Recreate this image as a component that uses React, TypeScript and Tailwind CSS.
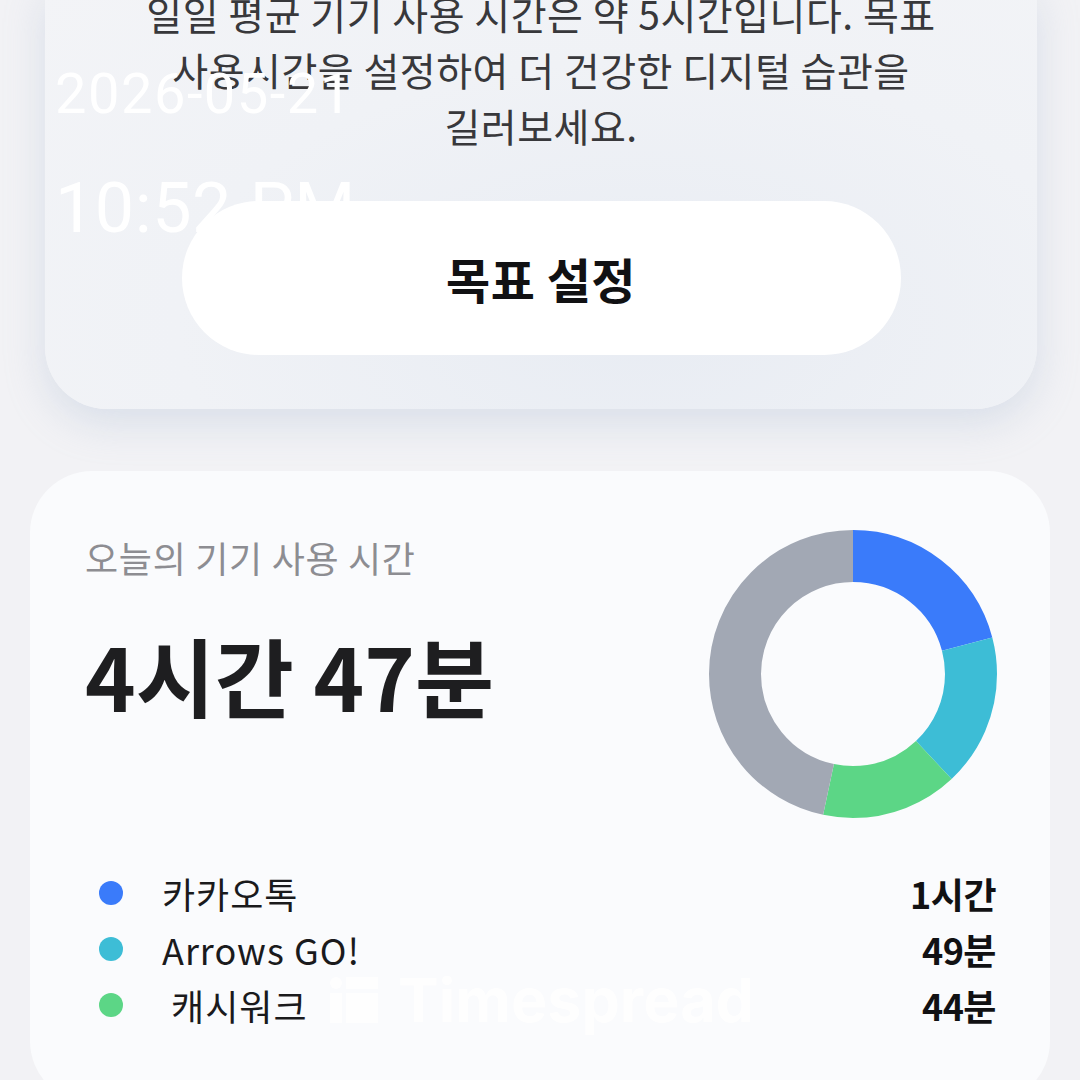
const usage = [
  { name: "카카오톡", minutes: 60, label: "1시간", color: "#3a7bfa" },
  { name: "Arrows GO!", minutes: 49, label: "49분", color: "#3dbdd6" },
  { name: " 캐시워크", minutes: 44, label: "44분", color: "#5cd686" },
];
const OTHER = { minutes: 134, color: "#a2a8b4" };

function Donut() {
  const r = 118;
  const c = 2 * Math.PI * r;
  const total = usage.reduce((s, u) => s + u.minutes, 0) + OTHER.minutes;
  const segments = [...usage, OTHER];
  let offset = 0;
  return (
    <svg width="290" height="290" viewBox="0 0 290 290" className="shrink-0">
      <g transform="rotate(-90 145 145)">
        {segments.map((s, i) => {
          const len = (s.minutes / total) * c;
          const el = (
            <circle
              key={i}
              cx="145"
              cy="145"
              r={r}
              fill="none"
              stroke={s.color}
              strokeWidth="52"
              strokeDasharray={`${len} ${c - len}`}
              strokeDashoffset={-offset}
            />
          );
          offset += len;
          return el;
        })}
      </g>
    </svg>
  );
}

function LogoMark() {
  return (
    <svg width="48" height="46" viewBox="0 0 48 46" className="shrink-0">
      <circle cx="6" cy="6" r="6" fill="#ffffff" />
      <rect x="0" y="16" width="12" height="30" fill="#ffffff" />
      <rect x="16" y="0" width="32" height="12" fill="#ffffff" />
      <rect x="16" y="16" width="32" height="30" fill="#ffffff" />
    </svg>
  );
}

export default function App() {
  return (
    <div
      className="relative h-[1080px] w-[1080px] overflow-hidden bg-[#f2f2f5]"
      style={{ fontFamily: '"Noto Sans CJK KR", "Noto Sans", sans-serif' }}
    >
      {/* Goal card (scrolled, top cut off) */}
      <div className="-mt-[15px] ml-[45px] mr-[43px] rounded-b-[62px] bg-[radial-gradient(ellipse_at_60%_80%,#e8ecf3_0%,#f0f2f6_55%,#f3f4f7_100%)] pb-[54px] shadow-[0_14px_40px_rgba(160,178,205,0.3)]">
        <p className="text-center text-[39px] leading-[56px] tracking-[0.5px] text-[#38383b]">
          일일 평균 기기 사용 시간은 약 5시간입니다. 목표
          <br />
          사용시간을 설정하여 더 건강한 디지털 습관을
          <br />
          길러보세요.
        </p>
        <button className="mx-auto mt-[48px] flex h-[154px] w-[719px] items-center justify-center rounded-full bg-white text-[48px] font-bold tracking-[0.5px] text-[#111113]">
          목표 설정
        </button>
      </div>

      {/* Today's usage card */}
      <div className="mx-[30px] mt-[62px] rounded-[62px] bg-[#fafbfd] pb-[70px] pl-[55px] pr-[52px] pt-[58px]">
        <div className="flex items-start justify-between">
          <div className="pt-[6px]">
            <p className="text-[36px] leading-[44px] tracking-[0.7px] text-[#8d8d92]">
              오늘의 기기 사용 시간
            </p>
            <p className="mt-[46px] text-[86px] font-bold leading-[100px] tracking-[0px] text-[#1e1e20]">
              4시간 47분
            </p>
          </div>
          <Donut />
        </div>

        <div className="mt-[46px] flex flex-col pl-[14px] pr-[2px]">
          {usage.map((u) => (
            <div key={u.name} className="flex h-[56px] items-center">
              <span
                className="h-[24px] w-[24px] shrink-0 rounded-full"
                style={{ backgroundColor: u.color }}
              />
              <span className="ml-[39px] whitespace-pre text-[36px] tracking-[1px] text-[#1a1a1c]">
                {u.name}
              </span>
              <span className="ml-auto text-[36px] font-semibold tracking-[-0.5px] text-[#111113]">
                {u.label}
              </span>
            </div>
          ))}
        </div>
      </div>

      {/* Watermark */}
      <div className="absolute left-[330px] top-[968px] flex items-center gap-[20px] opacity-95">
        <LogoMark />
        <span
          className="text-[61px] font-bold leading-[64px] tracking-[0px] text-white"
          style={{ fontFamily: 'Inter, "Liberation Sans", sans-serif' }}
        >
          Timespread
        </span>
      </div>

      {/* Timestamp overlay */}
      <div
        className="absolute left-[55px] top-[58px] font-normal text-white"
        style={{ fontFamily: 'Roboto, "Liberation Sans", sans-serif' }}
      >
        <p className="text-[56px] leading-[72px] tracking-[1.5px]">2026-05-21</p>
        <p className="mt-[38px] text-[70px] leading-[80px] tracking-[0.5px]">10:52 PM</p>
      </div>
    </div>
  );
}
